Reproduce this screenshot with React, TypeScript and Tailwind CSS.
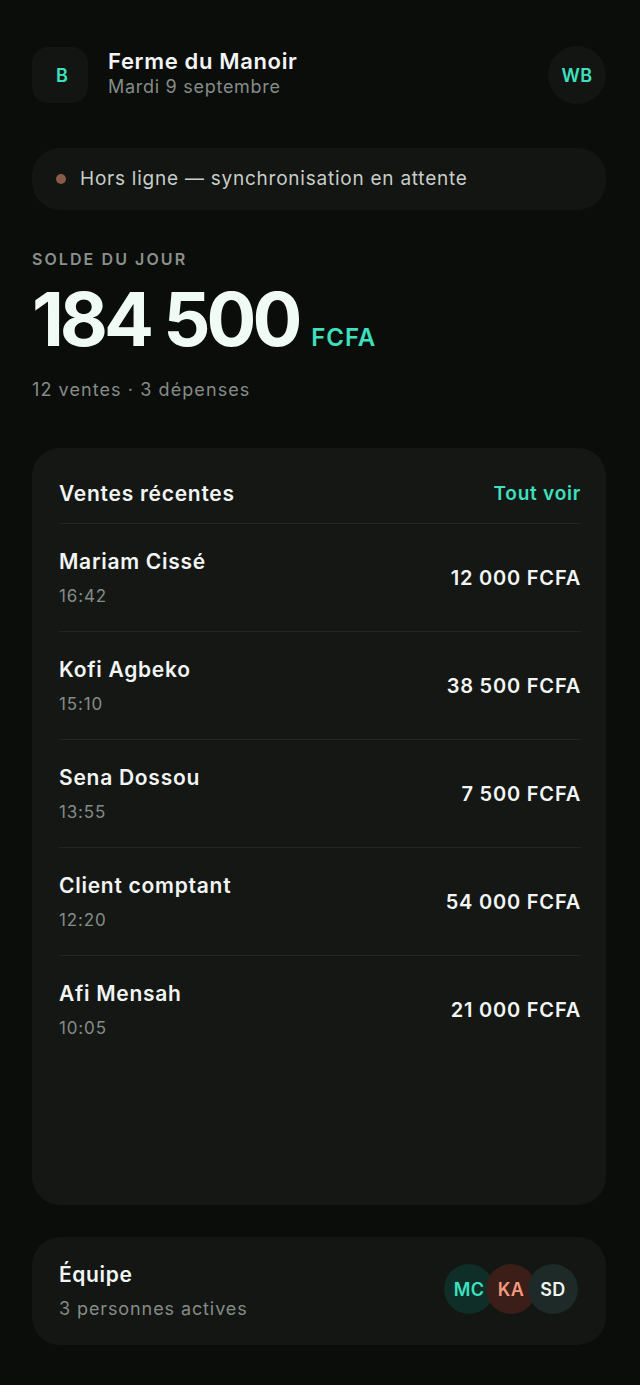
import React from "react";

const sales = [
  { name: "Mariam Cissé", time: "16:42", amount: "12 000 FCFA" },
  { name: "Kofi Agbeko", time: "15:10", amount: "38 500 FCFA" },
  { name: "Sena Dossou", time: "13:55", amount: "7 500 FCFA" },
  { name: "Client comptant", time: "12:20", amount: "54 000 FCFA" },
  { name: "Afi Mensah", time: "10:05", amount: "21 000 FCFA" },
];

const team = [
  { initials: "MC", className: "bg-[#0f2e27] text-[#3ee0bf]" },
  { initials: "KA", className: "bg-[#3a1e17] text-[#f29a80]" },
  { initials: "SD", className: "bg-[#1d2a27] text-[#eef3f0]" },
];

function SaleRow({ name, time, amount }: { name: string; time: string; amount: string }) {
  return (
    <div className="flex items-center justify-between border-t border-[#222622] h-[108px]">
      <div className="flex flex-col">
        <span className="text-[21px] font-semibold tracking-[0.035em] text-[#f2f5f3] leading-[28px]">{name}</span>
        <span className="text-[17px] tracking-[0.05em] text-[#858c87] leading-[24px] mt-[8px]">{time}</span>
      </div>
      <span className="text-[20px] font-semibold tracking-[0.04em] text-[#f2f5f3]">{amount}</span>
    </div>
  );
}

export default function App() {
  return (
    <div
      className="min-h-[1385px] flex flex-col bg-[#0b0d0b] pl-8 pr-[34px] pt-[46px] pb-10 text-[#f2f5f3]"
      style={{ fontFamily: "Inter, 'Noto Sans', sans-serif" }}
    >
      {/* header */}
      <div className="flex items-center justify-between">
        <div className="flex items-center gap-5">
          <div className="w-14 h-14 rounded-2xl bg-[#121512] flex items-center justify-center pl-1 text-[18px] font-semibold text-[#3ee0bf]">
            B
          </div>
          <div className="flex flex-col -mt-[2px]">
            <span className="text-[22px] font-semibold tracking-[0.03em] leading-[26px]">Ferme du Manoir</span>
            <span className="text-[18px] tracking-[0.04em] text-[#858c87] leading-[26px]">Mardi 9 septembre</span>
          </div>
        </div>
        <div className="w-[58px] h-[58px] rounded-full bg-[#121512] flex items-center justify-center text-[18px] font-semibold tracking-[0.02em] text-[#3ee0bf]">
          WB
        </div>
      </div>

      {/* sync status */}
      <div className="mt-11 h-[62px] rounded-[28px] bg-[#121512] flex items-center gap-[14px] px-6">
        <span className="w-[10px] h-[10px] rounded-full bg-[#8a5a48]" />
        <span className="text-[19px] tracking-[0.04em] text-[#c9cec9]">Hors ligne — synchronisation en attente</span>
      </div>

      {/* balance */}
      <div className="mt-[37px]">
        <div className="text-[16px] leading-[24px] font-semibold tracking-[0.13em] text-[#8a918c]">SOLDE DU JOUR</div>
        <div className="flex items-baseline gap-[13px] mt-2">
          <span className="text-[74px] font-bold leading-[80px] tracking-[-0.055em] text-[#f0fbf6]">184 500</span>
          <span className="text-[24px] font-semibold tracking-[0.04em] text-[#3ee0bf]">FCFA</span>
        </div>
        <div className="text-[18px] tracking-[0.06em] text-[#858c87] mt-[17px]">12 ventes · 3 dépenses</div>
      </div>

      {/* recent sales */}
      <div className="mt-[45px] flex-1 rounded-[28px] bg-[#141714] pl-[27px] pr-[25px]">
        <div className="flex items-start justify-between h-[75px] pt-[32px]">
          <span className="text-[21px] leading-[28px] font-semibold tracking-[0.035em]">Ventes récentes</span>
          <span className="text-[19px] leading-[28px] font-semibold tracking-[0.04em] text-[#3ee0bf]">Tout voir</span>
        </div>
        {sales.map((s) => (
          <SaleRow key={s.name} {...s} />
        ))}
      </div>

      {/* team */}
      <div className="mt-8 h-[108px] rounded-[28px] bg-[#131613] flex items-center justify-between pl-[27px] pr-[28px]">
        <div className="flex flex-col">
          <span className="text-[21px] font-semibold tracking-[0.03em] leading-[28px]">Équipe</span>
          <span className="text-[18px] tracking-[0.05em] text-[#858c87] leading-[24px] mt-[8px]">3 personnes actives</span>
        </div>
        <div className="flex -space-x-2 -mt-1">
          {team.map((m) => (
            <div
              key={m.initials}
              className={`w-[50px] h-[50px] rounded-full flex items-center justify-center text-[18px] font-semibold tracking-[0.02em] ${m.className}`}
            >
              {m.initials}
            </div>
          ))}
        </div>
      </div>
    </div>
  );
}
